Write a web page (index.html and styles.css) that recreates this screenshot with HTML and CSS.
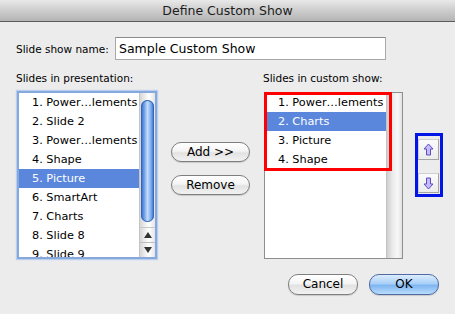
FILE: index.html
```html
<!DOCTYPE html>
<html>
<head>
<meta charset="utf-8">
<link rel="stylesheet" href="styles.css">
</head>
<body>
<div class="dialog">
  <div class="titlebar">Define Custom Show</div>
  <div class="content">
    <div class="name-row">
      <span class="name-label">Slide show name:</span>
      <div class="name-input">Sample Custom Show</div>
    </div>
    <div class="columns">
      <div class="col col-left">
        <div class="col-label">Slides in presentation:</div>
        <div class="list list-left">
          <div class="rows">
            <div class="row">1. Power…lements</div>
            <div class="row">2. Slide 2</div>
            <div class="row">3. Power…lements</div>
            <div class="row">4. Shape</div>
            <div class="row selected">5. Picture</div>
            <div class="row">6. SmartArt</div>
            <div class="row">7. Charts</div>
            <div class="row">8. Slide 8</div>
            <div class="row">9. Slide 9</div>
          </div>
          <div class="scrollbar">
            <div class="track"><div class="thumb"></div></div>
            <div class="sb-arrow sb-up"><span class="tri-up"></span></div>
            <div class="sb-arrow sb-down"><span class="tri-down"></span></div>
          </div>
        </div>
      </div>
      <div class="col col-mid">
        <button class="btn btn-add">Add &gt;&gt;</button>
        <button class="btn btn-remove">Remove</button>
      </div>
      <div class="col col-right">
        <div class="col-label">Slides in custom show:</div>
        <div class="list list-right">
          <div class="rows">
            <div class="row">1. Power…lements</div>
            <div class="row selected">2. Charts</div>
            <div class="row">3. Picture</div>
            <div class="row">4. Shape</div>
          </div>
          <div class="scrollbar empty"></div>
          <div class="red-box"></div>
        </div>
      </div>
      <div class="arrow-box">
        <div class="move-btn move-up">
          <svg width="11" height="13" viewBox="0 0 11 13"><path d="M5.5 1 L10 6 H7.5 V12 H3.5 V6 H1 Z" fill="#c4bcff" stroke="#5b4fc0" stroke-width="1" stroke-linejoin="round"/></svg>
        </div>
        <div class="move-btn move-down">
          <svg width="11" height="13" viewBox="0 0 11 13"><path d="M5.5 12 L10 7 H7.5 V1 H3.5 V7 H1 Z" fill="#c4bcff" stroke="#5b4fc0" stroke-width="1" stroke-linejoin="round"/></svg>
        </div>
      </div>
    </div>
    <div class="footer">
      <button class="btn btn-cancel">Cancel</button>
      <button class="btn btn-ok">OK</button>
    </div>
  </div>
</div>
</body>
</html>
```

FILE: styles.css
```css
html, body {
  margin: 0;
  padding: 0;
}
body {
  width: 455px;
  height: 314px;
  background: #ececec;
  font-family: "DejaVu Sans", "Liberation Sans", sans-serif;
  color: #000;
  overflow: hidden;
}
.dialog {
  width: 455px;
  height: 314px;
}
.titlebar {
  height: 21px;
  line-height: 22px;
  border-bottom: 1px solid #5c5c5c;
  background: linear-gradient(#e9e9e9, #d2d2d2 40%, #b4b4b4);
  text-align: center;
  font-size: 12.5px;
  color: #1c1c1c;
}
.content {
  padding-left: 16px;
}
.name-row {
  display: flex;
  align-items: center;
  margin-top: 15px;
  height: 23px;
}
.name-label {
  flex: 0 0 99px;
  font-size: 10.5px;
}
.name-input {
  box-sizing: border-box;
  width: 271px;
  height: 23px;
  background: #fff;
  border: 1px solid #a8a8a8;
  border-top-color: #8a8a8a;
  padding-left: 3px;
  font-size: 12.5px;
  line-height: 21px;
}
.columns {
  display: flex;
  align-items: flex-start;
  margin-top: 11px;
}
.col {
  display: flex;
  flex-direction: column;
}
.col-label {
  font-size: 10.5px;
  line-height: 14px;
  height: 14px;
  white-space: nowrap;
}
.col-left {
  width: 141px;
}
.list {
  box-sizing: border-box;
  display: flex;
  background: #fff;
  position: relative;
}
.list-left {
  margin-top: 6px;
  margin-left: 1px;
  width: 140px;
  height: 168px;
  border: 2px solid #86a8dd;
  box-shadow: 0 0 1px 1px #b9cff0;
}
.list-right {
  margin-top: 7px;
  margin-left: 1px;
  width: 139px;
  height: 167px;
  border: 1px solid #8e8e8e;
}
.rows {
  flex: 1;
  overflow: hidden;
}
.row {
  height: 19px;
  line-height: 19px;
  padding-left: 13px;
  font-size: 11.3px;
  white-space: nowrap;
}
.row.selected {
  background: #5a87dc;
  color: #fff;
}
.scrollbar {
  width: 15px;
  display: flex;
  flex-direction: column;
  background: linear-gradient(90deg, #d6d6d6, #f6f6f6 45%, #ffffff 60%, #e4e4e4);
  border-left: 1px solid #c4c4c4;
}
.scrollbar.empty {
  background: linear-gradient(90deg, #cfcfcf, #ececec 40%, #f7f7f7 70%, #e2e2e2);
}
.track {
  flex: 1;
  display: flex;
  flex-direction: column;
}
.thumb {
  margin: 7px 1px 0 1px;
  height: 122px;
  border-radius: 7px;
  background: linear-gradient(90deg, #2f63c8, #6fa0ea 25%, #c4dcfa 50%, #7fb0f0 75%, #2f63c8);
  box-shadow: inset 0 0 0 1px #3565b8;
}
.sb-arrow {
  height: 14px;
  display: flex;
  align-items: center;
  justify-content: center;
}
.sb-up {
  border-top: 1px solid #c8c8c8;
  border-bottom: 1px solid #bdbdbd;
}
.tri-up {
  width: 0;
  height: 0;
  border-left: 4px solid transparent;
  border-right: 4px solid transparent;
  border-bottom: 6px solid #333;
}
.tri-down {
  width: 0;
  height: 0;
  border-left: 4px solid transparent;
  border-right: 4px solid transparent;
  border-top: 6px solid #333;
}
.red-box {
  position: absolute;
  left: -1px;
  top: -1px;
  width: 128px;
  height: 79px;
  box-sizing: border-box;
  border: 3px solid #ff0000;
}
.col-mid {
  width: 79px;
  margin-left: 14px;
  padding-top: 71px;
  gap: 13px;
}
.col-right {
  margin-left: 13px;
  width: 140px;
}
.btn {
  box-sizing: border-box;
  font-family: "DejaVu Sans", "Liberation Sans", sans-serif;
  font-size: 12px;
  color: #000;
  border: 1px solid #7e7e7e;
  border-radius: 10px;
  background: linear-gradient(#ffffff, #f4f4f4 45%, #e2e2e2 55%, #f2f2f2);
  box-shadow: 0 1px 1px rgba(0,0,0,0.15);
  padding: 0;
  margin: 0;
  line-height: 18px;
}
.btn-add, .btn-remove {
  width: 79px;
  height: 20px;
}
.arrow-box {
  box-sizing: border-box;
  margin-left: 12px;
  margin-top: 62px;
  width: 28px;
  height: 64px;
  border: 3px solid #0015e6;
  display: flex;
  flex-direction: column;
  gap: 13px;
}
.move-btn {
  box-sizing: border-box;
  width: 21px;
  display: flex;
  align-items: center;
  justify-content: center;
  background: linear-gradient(#fbfbfb, #ececec);
  border: 1px solid #cfcfcf;
  border-right-color: #a4a4a4;
  border-bottom-color: #a4a4a4;
}
.move-up {
  margin-top: 3px;
  height: 21px;
}
.move-down {
  height: 20px;
}
.footer {
  display: flex;
  justify-content: flex-end;
  gap: 11px;
  padding-right: 16px;
  margin-top: 15px;
}
.btn-cancel, .btn-ok {
  width: 70px;
  height: 21px;
  line-height: 19px;
}
.btn-ok {
  border-color: #4f6aa4;
  background: linear-gradient(#dcecfc, #a9d0f8 45%, #7fb6f2 55%, #b9dcfc);
}
```
